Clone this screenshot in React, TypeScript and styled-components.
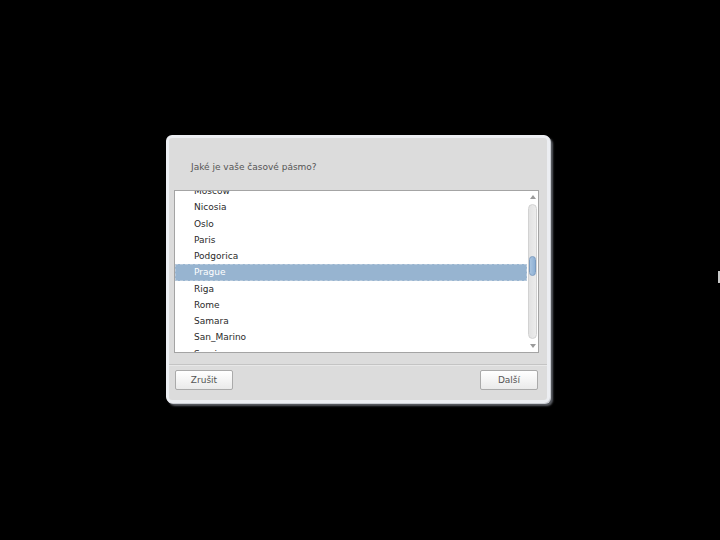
import React from 'react';
import styled, { createGlobalStyle } from 'styled-components';

const zones = [
  'Moscow',
  'Nicosia',
  'Oslo',
  'Paris',
  'Podgorica',
  'Prague',
  'Riga',
  'Rome',
  'Samara',
  'San_Marino',
  'Sarajevo',
];

const GlobalStyle = createGlobalStyle`
  html, body {
    margin: 0;
    padding: 0;
    background: #000;
  }
  body {
    font-family: "DejaVu Sans", "Liberation Sans", sans-serif;
  }
`;

const Screen = styled.div`
  width: 720px;
  height: 540px;
  display: flex;
  align-items: center;
  justify-content: center;
  position: relative;
  overflow: hidden;
`;

const EdgeTab = styled.div`
  position: absolute;
  right: 0;
  top: 271px;
  width: 2px;
  height: 12px;
  background: #c8c8c8;
`;

const Dialog = styled.div`
  box-sizing: border-box;
  width: 384px;
  height: 268px;
  margin-right: 4px;
  margin-bottom: 2px;
  border: 3px solid #eceef2;
  border-radius: 6px;
  background: #dcdcdc;
  box-shadow: 1px 1px 0 #c9ccd2, 3px 3px 2px rgba(150, 155, 165, 0.6);
  display: flex;
  flex-direction: column;
`;

const Title = styled.div`
  height: 52px;
  padding-left: 22px;
  padding-top: 5px;
  display: flex;
  align-items: center;
  box-sizing: border-box;
  font-size: 9px;
  color: #555;
`;

const ListBox = styled.div`
  margin: 0 8px 0 5px;
  height: 163px;
  box-sizing: border-box;
  border: 1px solid #a4a4a4;
  background: #fff;
  display: grid;
  grid-template-columns: 1fr 11px;
`;

const Viewport = styled.div`
  overflow: hidden;
  position: relative;
`;

const Rows = styled.div`
  margin-top: -8px;
`;

const Row = styled.div<{ $selected?: boolean }>`
  height: 16.25px;
  box-sizing: border-box;
  padding-left: 18px;
  display: flex;
  align-items: center;
  font-size: 9px;
  color: ${(p) => (p.$selected ? '#ffffff' : '#2a2a2a')};
  background: ${(p) => (p.$selected ? '#97b4d0' : 'transparent')};
  border: 1px dashed ${(p) => (p.$selected ? '#b8cadc' : 'transparent')};
`;

const Scrollbar = styled.div`
  display: flex;
  flex-direction: column;
  align-items: center;
  padding: 3px 0 3px;
  box-sizing: border-box;
  background: #fff;
`;

const Arrow = styled.div<{ $down?: boolean }>`
  width: 0;
  height: 0;
  border-left: 3px solid transparent;
  border-right: 3px solid transparent;
  ${(p) =>
    p.$down
      ? 'border-top: 4px solid #9a9a9a;'
      : 'border-bottom: 4px solid #9a9a9a;'}
  margin: 1px 0;
`;

const Trough = styled.div`
  flex: 1;
  width: 9px;
  margin: 4px 0;
  box-sizing: border-box;
  border: 1px solid #d2d2d2;
  border-radius: 5px;
  background: linear-gradient(to right, #e2e2e2, #ececec);
  padding-top: 51px;
  display: flex;
  justify-content: center;
`;

const Thumb = styled.div`
  width: 8px;
  height: 20px;
  box-sizing: border-box;
  border: 1px solid #7c9cc0;
  border-radius: 4px;
  background: linear-gradient(to right, #a8c4e0, #8eb0d4);
`;

const Separator = styled.div`
  margin-top: 11px;
  height: 1px;
  background: #c4c4c4;
  border-bottom: 1px solid #e8e8e8;
`;

const Footer = styled.div`
  display: flex;
  justify-content: space-between;
  padding: 4px 9px 0 6px;
`;

const Button = styled.button`
  width: 58px;
  height: 20px;
  box-sizing: border-box;
  border: 1px solid #aaaaaa;
  border-radius: 2px;
  background: linear-gradient(to bottom, #ffffff, #eaeaea);
  font-family: "DejaVu Sans", "Liberation Sans", sans-serif;
  font-size: 9px;
  color: #555;
  padding: 0;
`;

export default function App() {
  return (
    <>
      <GlobalStyle />
      <Screen>
        <Dialog>
          <Title>Jaké je vaše časové pásmo?</Title>
          <ListBox>
            <Viewport>
              <Rows>
                {zones.map((z) => (
                  <Row key={z} $selected={z === 'Prague'}>
                    {z}
                  </Row>
                ))}
              </Rows>
            </Viewport>
            <Scrollbar>
              <Arrow />
              <Trough>
                <Thumb />
              </Trough>
              <Arrow $down />
            </Scrollbar>
          </ListBox>
          <Separator />
          <Footer>
            <Button>Zrušit</Button>
            <Button>Další</Button>
          </Footer>
        </Dialog>
        <EdgeTab />
      </Screen>
    </>
  );
}
